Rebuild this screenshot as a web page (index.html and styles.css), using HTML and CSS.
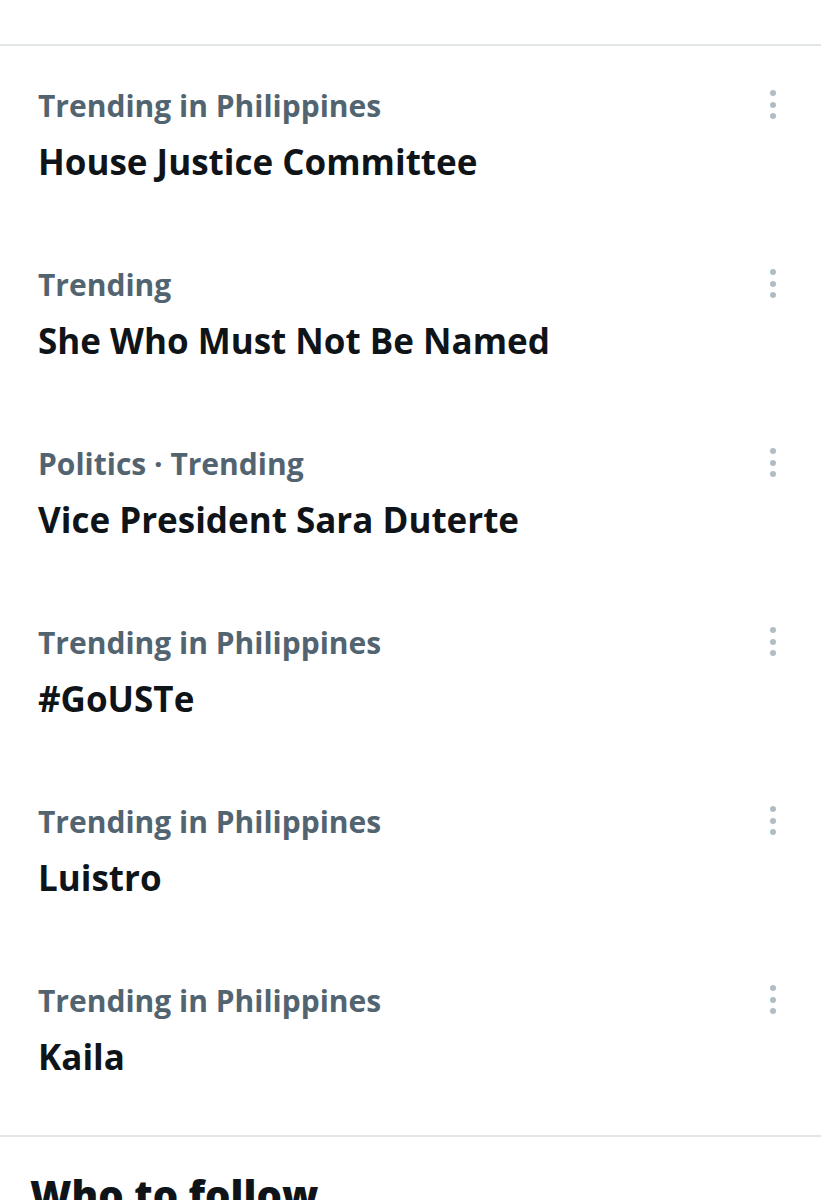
FILE: index.html
```html
<!DOCTYPE html>
<html lang="en">
<head>
    <meta charset="UTF-8">
    <title>Trends</title>
    <link rel="stylesheet" href="styles.css">
</head>
<body>
<div class="top-space"></div>
<section class="trends">
    <div class="trend">
        <div class="trend-text">
            <p class="trend-meta">Trending in Philippines</p>
            <p class="trend-name">House Justice Committee</p>
        </div>
        <button class="more" aria-label="More"><span></span><span></span><span></span></button>
    </div>
    <div class="trend">
        <div class="trend-text">
            <p class="trend-meta">Trending</p>
            <p class="trend-name">She Who Must Not Be Named</p>
        </div>
        <button class="more" aria-label="More"><span></span><span></span><span></span></button>
    </div>
    <div class="trend">
        <div class="trend-text">
            <p class="trend-meta">Politics · Trending</p>
            <p class="trend-name">Vice President Sara Duterte</p>
        </div>
        <button class="more" aria-label="More"><span></span><span></span><span></span></button>
    </div>
    <div class="trend">
        <div class="trend-text">
            <p class="trend-meta">Trending in Philippines</p>
            <p class="trend-name">#GoUSTe</p>
        </div>
        <button class="more" aria-label="More"><span></span><span></span><span></span></button>
    </div>
    <div class="trend">
        <div class="trend-text">
            <p class="trend-meta">Trending in Philippines</p>
            <p class="trend-name">Luistro</p>
        </div>
        <button class="more" aria-label="More"><span></span><span></span><span></span></button>
    </div>
    <div class="trend">
        <div class="trend-text">
            <p class="trend-meta">Trending in Philippines</p>
            <p class="trend-name">Kaila</p>
        </div>
        <button class="more" aria-label="More"><span></span><span></span><span></span></button>
    </div>
</section>
<section class="follow">
    <h2>Who to follow</h2>
</section>
</body>
</html>
```

FILE: styles.css
```css
body {
    margin: 0;
    background: #fff;
    font-family: "Open Sans", "Noto Sans", sans-serif;
    color: #0f1419;
}

.top-space {
    height: 44px;
    border-bottom: 2px solid #e1e6e9;
}

.trends {
    padding-top: 4px;
    border-bottom: 2px solid #e1e6e9;
}

.trend {
    display: flex;
    justify-content: space-between;
    align-items: flex-start;
    height: 179px;
    padding: 36px 38px 0 38px;
    box-sizing: border-box;
}

.trend:last-child {
    height: 190px;
}

.trend p {
    margin: 0;
}

.trend-meta {
    font-size: 30px;
    font-weight: 700;
    line-height: 40px;
    color: #536471;
}

.trend-name {
    margin-top: 13px !important;
    font-size: 35px;
    font-weight: 700;
    line-height: 46px;
}

.more {
    display: flex;
    flex-direction: column;
    gap: 5.5px;
    margin: 4px 7px 0 0;
    padding: 0;
    border: 0;
    background: none;
}

.more span {
    width: 6px;
    height: 6px;
    border-radius: 50%;
    background: #b0bdc5;
}

.follow {
    padding: 28px 30px 0;
}

.follow h2 {
    margin: 0;
    font-size: 40px;
    font-weight: 800;
    line-height: 60px;
}
```
